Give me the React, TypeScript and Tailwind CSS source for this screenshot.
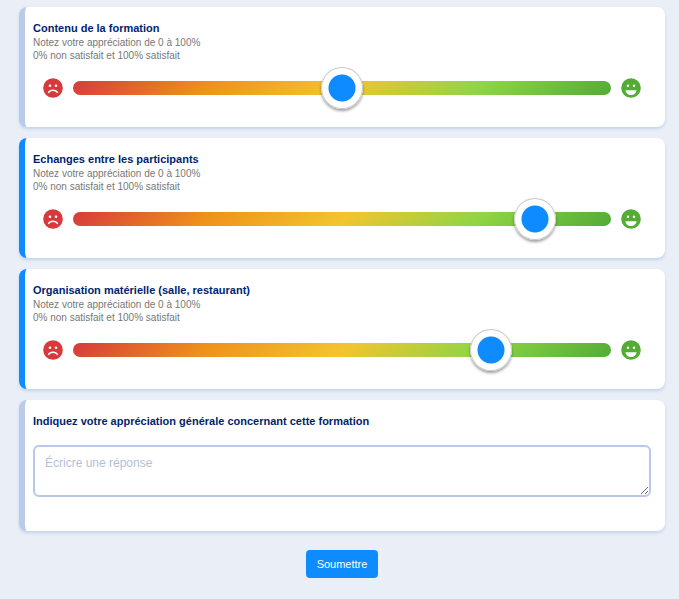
import { useState } from "react";
import clsx from "clsx";

type Question = {
  id: string;
  title: string;
  value: number;
  answered: boolean;
};

const questions: Question[] = [
  { id: "contenu", title: "Contenu de la formation", value: 50, answered: false },
  { id: "echanges", title: "Echanges entre les participants", value: 89, answered: true },
  { id: "organisation", title: "Organisation matérielle (salle, restaurant)", value: 80, answered: true },
];

function SadFace() {
  return (
    <svg viewBox="0 0 20 20" className="size-5 shrink-0" aria-hidden="true">
      <circle cx="10" cy="10" r="9.8" fill="#d63a3c" />
      <circle cx="7" cy="7.8" r="1.3" fill="#fff" />
      <circle cx="13" cy="7.8" r="1.3" fill="#fff" />
      <path d="M5.6 14.4C7.2 11.4 12.8 11.4 14.4 14.4" fill="none" stroke="#fff" strokeWidth="1.5" strokeLinecap="round" />
    </svg>
  );
}

function HappyFace() {
  return (
    <svg viewBox="0 0 20 20" className="size-5 shrink-0" aria-hidden="true">
      <circle cx="10" cy="10" r="9.8" fill="#53ad35" />
      <circle cx="7" cy="7.8" r="1.2" fill="#fff" />
      <circle cx="13" cy="7.8" r="1.2" fill="#fff" />
      <path d="M4.4 12.2H15.6C15.2 15.2 13 16.9 10 16.9S4.8 15.2 4.4 12.2Z" fill="#fff" />
    </svg>
  );
}

function Card({ answered, className, children }: { answered: boolean; className: string; children: React.ReactNode }) {
  return (
    <section
      className={clsx(
        "rounded-lg border-l-6 bg-white pt-[13px] pr-[14px] pl-2 shadow-[0_2px_3px_#c3d5ea]",
        answered ? "border-[#0d8bff]" : "border-[#b9cbe9]",
        className,
      )}
    >
      {children}
    </section>
  );
}

function SliderCard({ question }: { question: Question }) {
  const [value, setValue] = useState(question.value);
  const [answered, setAnswered] = useState(question.answered);

  return (
    <Card answered={answered} className="pb-[29px]">
      <label htmlFor={question.id} className="block text-[11px] leading-4 font-bold text-[#001f70]">
        {question.title}
      </label>
      <p className="text-[10px] leading-[13px] text-[#777]">
        Notez votre appréciation de 0 à 100%
        <br />
        0% non satisfait et 100% satisfait
      </p>
      <div className="mt-4 flex items-center gap-2.5 px-2.5">
        <SadFace />
        <input
          id={question.id}
          type="range"
          min={0}
          max={100}
          value={value}
          onChange={(e) => {
            setValue(Number(e.target.value));
            setAnswered(true);
          }}
          className="h-3.5 min-w-0 flex-1 cursor-pointer appearance-none rounded-full bg-[linear-gradient(135deg,#d63a3c_0%,#ee921a_25%,#f3c42f_50%,#8fd544_75%,#53ab37_100%)] [&::-webkit-slider-thumb]:size-[42px] [&::-webkit-slider-thumb]:appearance-none [&::-webkit-slider-thumb]:rounded-full [&::-webkit-slider-thumb]:bg-[radial-gradient(circle,#0d8bff_13px,#fff_14px)] [&::-webkit-slider-thumb]:shadow-[inset_0_0_0_1px_#c8c8c8,0_2px_3px_#00000060]"
        />
        <HappyFace />
      </div>
    </Card>
  );
}

export default function App() {
  return (
    <main className="min-h-screen bg-[#e9eef7] pt-[7px] pr-[14px] pb-5 pl-[19px] font-['Liberation_Sans',Arial,sans-serif]">
      <form className="flex flex-col gap-[11px]" onSubmit={(e) => e.preventDefault()}>
        {questions.map((question) => (
          <SliderCard key={question.id} question={question} />
        ))}
        <Card answered={false} className="pb-[34px]">
          <label htmlFor="appreciation" className="block text-[11px] leading-4 font-bold text-[#001f70]">
            Indiquez votre appréciation générale concernant cette formation
          </label>
          <textarea
            id="appreciation"
            placeholder="Écricre une réponse"
            className="mt-4 block h-[52px] w-full rounded-md border-2 border-[#b5c9ea] px-2.5 py-2 text-[12px] leading-4 text-[#001f70] outline-none placeholder:text-[#b1bfd9]"
          />
        </Card>
        <button
          type="submit"
          className="mt-2 h-7 cursor-pointer self-center rounded-sm bg-[#0d8bff] px-[11px] text-[11px] leading-4 text-white"
        >
          Soumettre
        </button>
      </form>
    </main>
  );
}
